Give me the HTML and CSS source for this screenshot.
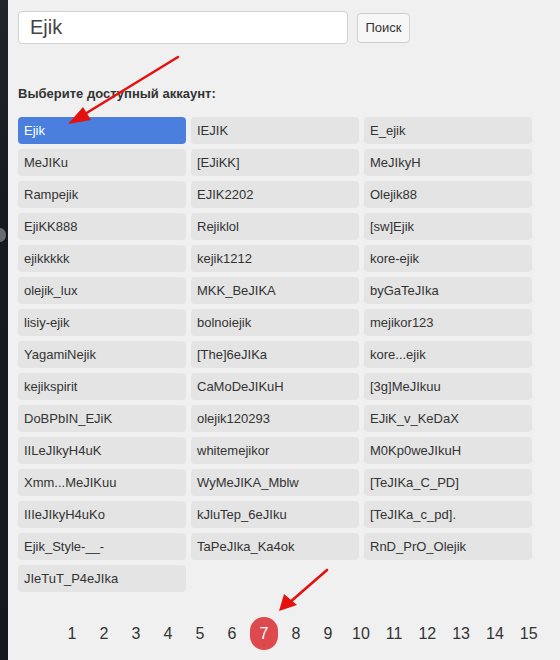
FILE: index.html
```html
<!DOCTYPE html>
<html lang="ru">
<head>
<meta charset="utf-8">
<title>Выбор аккаунта</title>
<link rel="stylesheet" href="styles.css">
</head>
<body>
<div class="page">
  <div class="strip"><span class="blob"></span></div>
  <main class="main">
    <form class="search">
      <input class="search-input" type="text" value="Ejik">
      <button class="search-btn" type="button">Поиск</button>
    </form>
    <div class="label">Выберите доступный аккаунт:</div>
    <div class="grid">
      <div class="acc selected">Ejik</div>
      <div class="acc">IEJIK</div>
      <div class="acc">E_ejik</div>
      <div class="acc">MeJIKu</div>
      <div class="acc">[EJiKK]</div>
      <div class="acc">MeJIkyH</div>
      <div class="acc">Rampejik</div>
      <div class="acc">EJIK2202</div>
      <div class="acc">Olejik88</div>
      <div class="acc">EjiKK888</div>
      <div class="acc">Rejiklol</div>
      <div class="acc">[sw]Ejik</div>
      <div class="acc">ejikkkkk</div>
      <div class="acc">kejik1212</div>
      <div class="acc">kore-ejik</div>
      <div class="acc">olejik_lux</div>
      <div class="acc">MKK_BeJIKA</div>
      <div class="acc">byGaTeJIka</div>
      <div class="acc">lisiy-ejik</div>
      <div class="acc">bolnoiejik</div>
      <div class="acc">mejikor123</div>
      <div class="acc">YagamiNejik</div>
      <div class="acc">[The]6eJIKa</div>
      <div class="acc">kore...ejik</div>
      <div class="acc">kejikspirit</div>
      <div class="acc">CaMoDeJIKuH</div>
      <div class="acc">[3g]MeJIkuu</div>
      <div class="acc">DoBPbIN_EJiK</div>
      <div class="acc">olejik120293</div>
      <div class="acc">EJiK_v_KeDaX</div>
      <div class="acc">IILeJIkyH4uK</div>
      <div class="acc">whitemejikor</div>
      <div class="acc">M0Kp0weJIkuH</div>
      <div class="acc">Xmm...MeJIKuu</div>
      <div class="acc">WyMeJIKA_Mblw</div>
      <div class="acc">[TeJIKa_C_PD]</div>
      <div class="acc">IIIeJIkyH4uKo</div>
      <div class="acc">kJluTep_6eJIku</div>
      <div class="acc">[TeJIKa_c_pd].</div>
      <div class="acc">Ejik_Style-__-</div>
      <div class="acc">TaPeJIka_Ka4ok</div>
      <div class="acc">RnD_PrO_Olejik</div>
      <div class="acc">JIeTuT_P4eJIka</div>
    </div>
    <ul class="pager">
      <li class="pg">1</li>
      <li class="pg">2</li>
      <li class="pg">3</li>
      <li class="pg">4</li>
      <li class="pg">5</li>
      <li class="pg">6</li>
      <li class="pg active">7</li>
      <li class="pg">8</li>
      <li class="pg">9</li>
      <li class="pg">10</li>
      <li class="pg">11</li>
      <li class="pg">12</li>
      <li class="pg">13</li>
      <li class="pg">14</li>
      <li class="pg">15</li>
    </ul>
  </main>
  <svg class="arrows" width="560" height="660" viewBox="0 0 560 660">
    <g stroke="#e3120f" stroke-width="2.6" stroke-linecap="round" fill="none">
      <line x1="178" y1="57" x2="80" y2="117"/>
      <line x1="327" y1="570" x2="289" y2="603"/>
    </g>
    <g fill="#e3120f">
      <polygon points="68,124 83,107 91,120"/>
      <polygon points="279,611 284,594 297,605"/>
    </g>
  </svg>
</div>
</body>
</html>
```
FILE: styles.css
```css
html, body {
  margin: 0;
  padding: 0;
  background: #f0f0f0;
}
body {
  font-family: "Liberation Sans", Arial, sans-serif;
  color: #333;
}
.page {
  position: relative;
  display: flex;
  width: 560px;
  height: 660px;
  overflow: hidden;
}
.strip {
  position: relative;
  width: 8px;
  flex: 0 0 8px;
  background: linear-gradient(180deg, #23252d 0%, #181a22 30%, #15171f 100%);
}
.blob {
  position: absolute;
  left: -6px;
  top: 228px;
  width: 12px;
  height: 14px;
  border-radius: 50%;
  background: #6a6b70;
}
.main {
  flex: 1;
  padding: 11px 10px 0 10px;
}
.search {
  display: flex;
  align-items: center;
  gap: 9px;
  margin: 0;
}
.search-input {
  box-sizing: border-box;
  width: 330px;
  height: 33px;
  margin: 0;
  padding: 0 11px;
  border: 1px solid #d2d2d2;
  border-radius: 4px;
  background: #fff;
  font-family: "Liberation Sans", Arial, sans-serif;
  font-size: 20px;
  color: #444;
  outline: none;
}
.search-btn {
  box-sizing: border-box;
  width: 53px;
  height: 30px;
  margin: 0;
  padding: 0;
  border: 1px solid #cfcfcf;
  border-radius: 4px;
  background: #f7f7f7;
  font-family: "Liberation Sans", Arial, sans-serif;
  font-size: 13px;
  color: #333;
}
.label {
  margin-top: 42px;
  font-size: 13px;
  font-weight: bold;
  line-height: 15px;
  color: #333;
}
.grid {
  display: grid;
  grid-template-columns: repeat(3, 168px);
  column-gap: 5px;
  row-gap: 5px;
  margin-top: 16px;
}
.acc {
  height: 27px;
  line-height: 27px;
  padding-left: 6px;
  border-radius: 4px;
  background: #e4e4e4;
  font-size: 13px;
  color: #333;
  white-space: nowrap;
}
.acc.selected {
  background: #4a7fdd;
  color: #fff;
}
.pager {
  display: flex;
  list-style: none;
  margin: 25px 0 0 0;
  padding: 0 0 0 40px;
}
.pg {
  box-sizing: border-box;
  min-width: 28px;
  height: 33px;
  line-height: 33px;
  margin-right: 4px;
  padding: 0 6px;
  text-align: center;
  font-size: 16px;
  color: #333;
}
.pg.active {
  background: #dc4a4e;
  color: #fff;
  border-radius: 14px;
}
.arrows {
  position: absolute;
  left: 0;
  top: 0;
  pointer-events: none;
}
```
